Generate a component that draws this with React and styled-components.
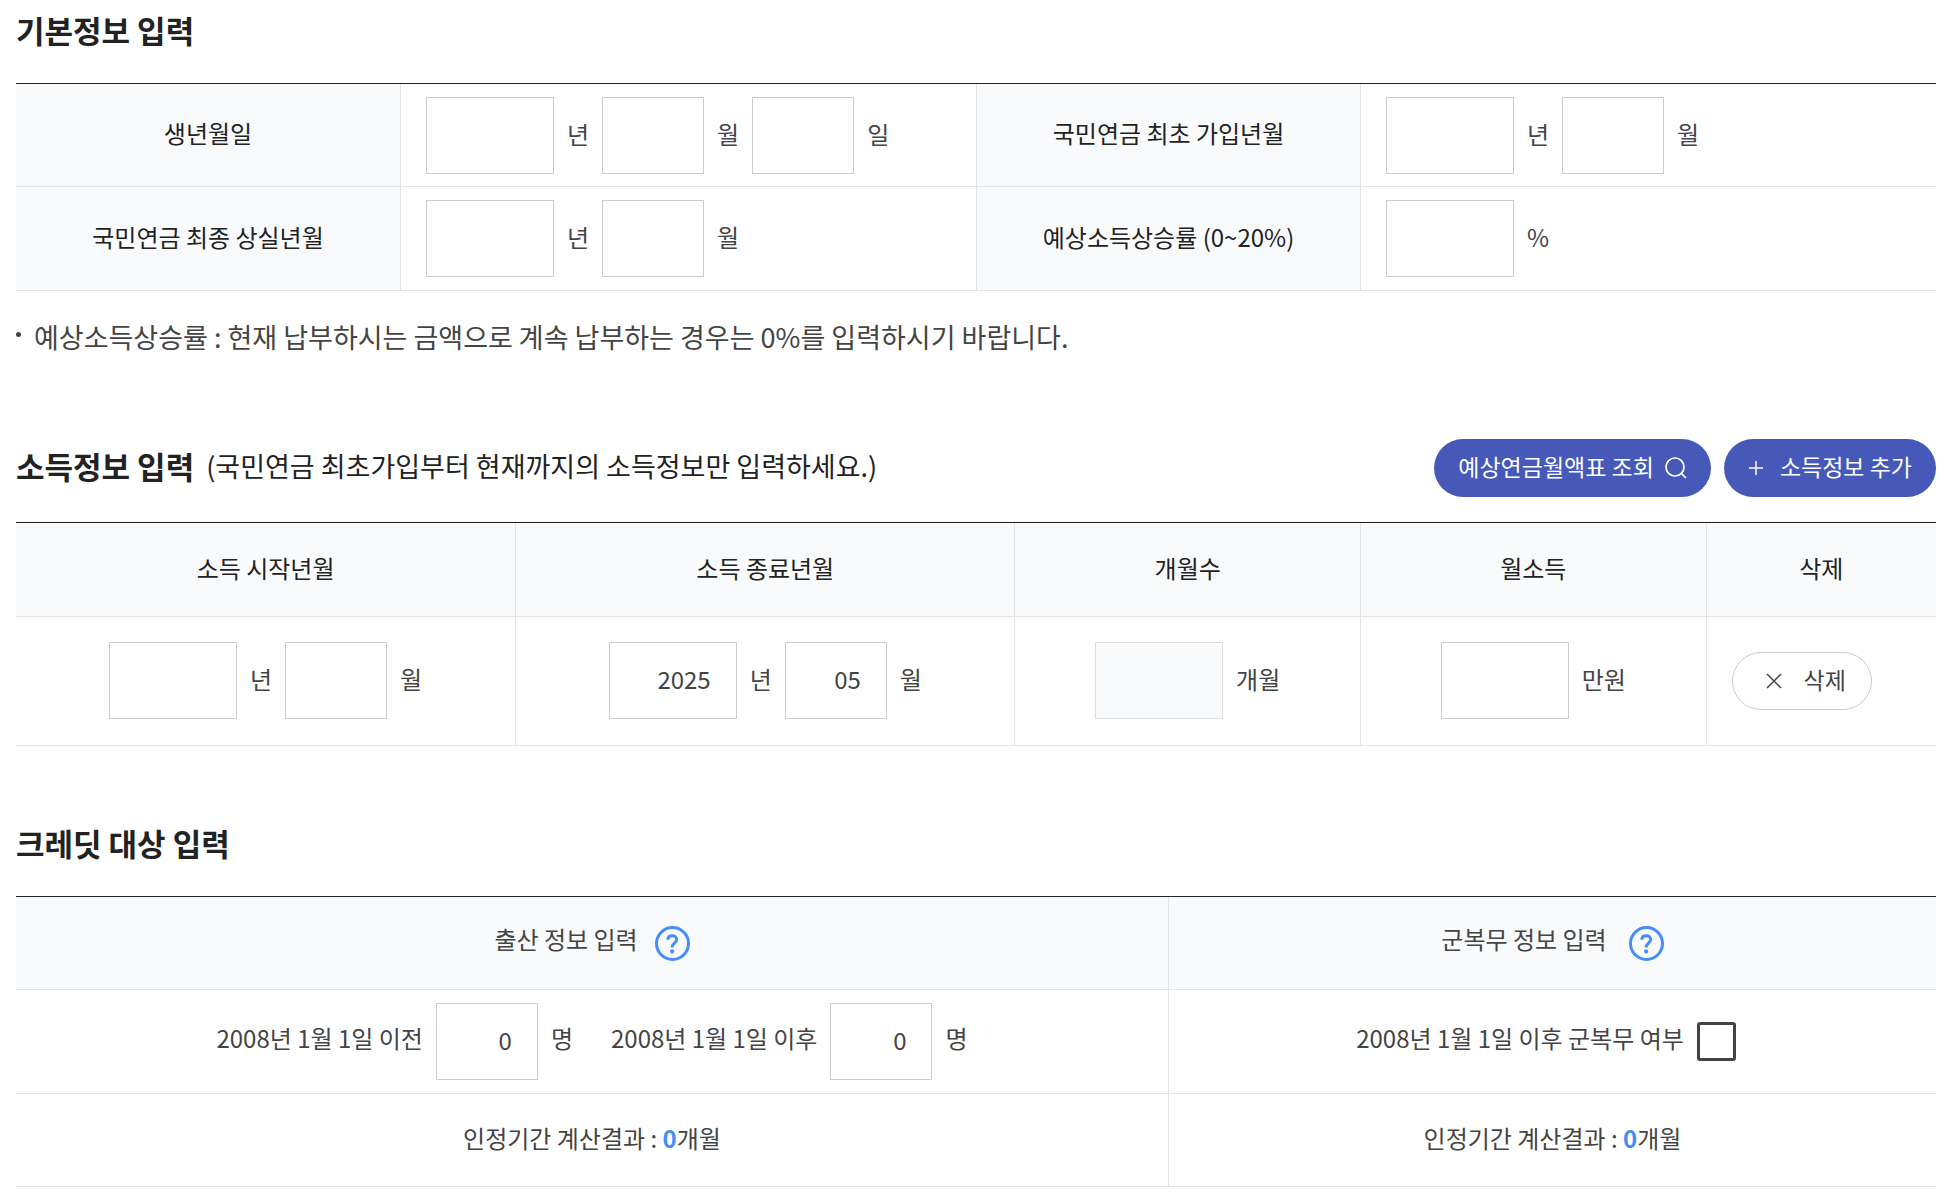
import React from 'react'
import styled, { createGlobalStyle } from 'styled-components'

const GlobalStyle = createGlobalStyle`
  * {
    box-sizing: border-box;
  }
  body {
    margin: 0;
    background: #fff;
    color: #444;
    font-family: "Noto Sans CJK KR", "Noto Sans", sans-serif;
    font-size: 24px;
    line-height: 36px;
  }
  input, button {
    font: inherit;
    color: inherit;
  }
`

const Container = styled.main`
  padding: 6px 12px 8px 16px;
`

const Section = styled.section`
  margin-bottom: 73px;
  &:last-child {
    margin-bottom: 0;
  }
`

const SectionHead = styled.div`
  display: flex;
  align-items: center;
  gap: 12px;
  min-height: 52px;
  margin-bottom: 25px;
`

const Title = styled.h2`
  margin: 0;
  padding-bottom: 4px;
  font-size: 31px;
  line-height: 48px;
  font-weight: 700;
  color: #222;
`

const SubTitle = styled.span`
  padding-bottom: 4px;
  font-size: 27px;
  line-height: 48px;
  color: #222;
`

const ButtonGroup = styled.div`
  display: flex;
  gap: 13px;
  margin-left: auto;
`

const PillButton = styled.button`
  display: flex;
  align-items: center;
  gap: ${(props) => props.$gap || '11px'};
  height: 58px;
  padding: 0 24px;
  border: 0;
  border-radius: 29px;
  background: #4659b8;
  color: #fff;
  font-size: 23px;
  cursor: pointer;
`

const DeleteButton = styled(PillButton)`
  padding: 0 25px 0 33px;
  border: 1px solid #ccc;
  background: #fff;
  color: #444;
`

const Table = styled.table`
  width: 100%;
  table-layout: fixed;
  border-collapse: separate;
  border-spacing: 0;
  border-top: 1px solid #222;
`

const Th = styled.th`
  height: ${(props) => props.$height || 'auto'};
  padding: ${(props) => (props.$soft ? '0' : '0 0 4px')};
  background: #f9fafc;
  border-bottom: 1px solid #e3e4e6;
  color: ${(props) => (props.$soft ? '#444' : '#222')};
  font-weight: 400;
  text-align: center;
  & + &, td + & {
    border-left: 1px solid #e3e4e6;
  }
`

const Td = styled.td`
  height: ${(props) => props.$height || 'auto'};
  padding: ${(props) => props.$padding || '13px 25px'};
  border-bottom: 1px solid #e3e4e6;
  text-align: center;
  & + &, th + & {
    border-left: 1px solid #e3e4e6;
  }
`

const Fields = styled.div`
  display: flex;
  align-items: center;
  justify-content: ${(props) => (props.$center ? 'center' : 'flex-start')};
  gap: ${(props) => props.$gap || '13px'};
`

const Label = styled.label`
  display: flex;
  align-items: center;
  gap: 13px;
`

const CheckLabel = styled(Label)`
  padding-right: 13px;
`

const Text = styled.span`
  padding-bottom: ${(props) => (props.$high ? '8px' : '4px')};
`

const Input = styled.input`
  width: ${(props) => (props.$short ? '102px' : '128px')};
  height: 77px;
  padding: 0 25px 4px;
  border: 1px solid #ccc;
  border-radius: 0;
  background: #fff;
  text-align: right;
  outline: none;
  &:disabled {
    background: #f9fafc;
    border-color: #ddd;
  }
`

const Checkbox = styled.input`
  appearance: none;
  width: 39px;
  height: 39px;
  margin: 0;
  border: 3px solid #444;
  border-radius: 3px;
  background: #fff;
  &:checked {
    background: #444;
  }
`

const NoteList = styled.ul`
  margin: 0;
  padding: 23px 0 6px;
  list-style: none;
`

const NoteItem = styled.li`
  display: flex;
  align-items: center;
  gap: 13px;
  font-size: 27px;
  line-height: 46px;
  &::before {
    content: "";
    width: 5px;
    height: 5px;
    margin-bottom: 5px;
    border-radius: 50%;
    background: #444;
  }
`

const HelpButton = styled.button`
  display: flex;
  padding: 0;
  border: 0;
  background: none;
  cursor: pointer;
`

const Result = styled.strong`
  color: #448ef7;
  font-weight: 700;
`

const SearchIcon = () => (
  <svg width="22" height="22" viewBox="0 0 22 22" fill="none" stroke="currentColor" strokeWidth="1.7" aria-hidden="true">
    <circle cx="10" cy="10" r="9" />
    <path d="M16.6 16.6L21 21" />
  </svg>
)

const PlusIcon = () => (
  <svg width="16" height="16" viewBox="0 0 16 16" fill="none" stroke="currentColor" strokeWidth="1.5" aria-hidden="true">
    <path d="M8 1V15M1 8H15" />
  </svg>
)

const CloseIcon = () => (
  <svg width="16" height="16" viewBox="0 0 16 16" fill="none" stroke="currentColor" strokeWidth="1.5" aria-hidden="true">
    <path d="M1 1L15 15M15 1L1 15" />
  </svg>
)

const HelpIcon = () => (
  <svg width="35" height="35" viewBox="0 0 35 35" fill="none" stroke="#448ef7" aria-hidden="true">
    <circle cx="17.5" cy="17.5" r="16" strokeWidth="3" />
    <path d="M12.8 13.8C12.9 11.2 14.7 9.8 17.3 9.8C19.9 9.8 21.7 11.3 21.7 13.5C21.7 16.7 17.1 17 17.1 21.4" strokeWidth="3" />
    <circle cx="17.1" cy="25.4" r="2.1" fill="#448ef7" stroke="none" />
  </svg>
)

const Field = ({ unit, ...rest }) => (
  <Label>
    <Input type="text" {...rest} />
    <Text>{unit}</Text>
  </Label>
)

const App = () => {
  return (
    <>
      <GlobalStyle />
      <Container>
        <Section>
          <SectionHead>
            <Title>기본정보 입력</Title>
          </SectionHead>
          <Table>
            <colgroup>
              <col width="20%" />
              <col width="30%" />
              <col width="20%" />
              <col width="30%" />
            </colgroup>
            <tbody>
              <tr>
                <Th scope="row">생년월일</Th>
                <Td $padding="13px 25px 12px">
                  <Fields>
                    <Field unit="년" />
                    <Field unit="월" $short />
                    <Field unit="일" $short />
                  </Fields>
                </Td>
                <Th scope="row">국민연금 최초 가입년월</Th>
                <Td $padding="13px 25px 12px">
                  <Fields>
                    <Field unit="년" />
                    <Field unit="월" $short />
                  </Fields>
                </Td>
              </tr>
              <tr>
                <Th scope="row">국민연금 최종 상실년월</Th>
                <Td>
                  <Fields>
                    <Field unit="년" />
                    <Field unit="월" $short />
                  </Fields>
                </Td>
                <Th scope="row">예상소득상승률 (0~20%)</Th>
                <Td>
                  <Fields>
                    <Field unit="%" />
                  </Fields>
                </Td>
              </tr>
            </tbody>
          </Table>
          <NoteList>
            <NoteItem>
              예상소득상승률 : 현재 납부하시는 금액으로 계속 납부하는 경우는 0%를 입력하시기 바랍니다.
            </NoteItem>
          </NoteList>
        </Section>

        <Section>
          <SectionHead>
            <Title>소득정보 입력</Title>
            <SubTitle>(국민연금 최초가입부터 현재까지의 소득정보만 입력하세요.)</SubTitle>
            <ButtonGroup>
              <PillButton type="button">
                <Text>예상연금월액표 조회</Text>
                <SearchIcon />
              </PillButton>
              <PillButton type="button" $gap="16px">
                <PlusIcon />
                <Text>소득정보 추가</Text>
              </PillButton>
            </ButtonGroup>
          </SectionHead>
          <Table>
            <colgroup>
              <col width="26%" />
              <col width="26%" />
              <col width="18%" />
              <col width="18%" />
              <col width="12%" />
            </colgroup>
            <thead>
              <tr>
                <Th scope="col" $height="94px">소득 시작년월</Th>
                <Th scope="col">소득 종료년월</Th>
                <Th scope="col">개월수</Th>
                <Th scope="col">월소득</Th>
                <Th scope="col">삭제</Th>
              </tr>
            </thead>
            <tbody>
              <tr>
                <Td $padding="25px 25px 26px">
                  <Fields $center>
                    <Field unit="년" />
                    <Field unit="월" $short />
                  </Fields>
                </Td>
                <Td $padding="25px 25px 26px">
                  <Fields $center>
                    <Field unit="년" defaultValue="2025" />
                    <Field unit="월" defaultValue="05" $short />
                  </Fields>
                </Td>
                <Td $padding="25px 25px 26px">
                  <Fields $center>
                    <Field unit="개월" disabled />
                  </Fields>
                </Td>
                <Td $padding="25px 25px 26px">
                  <Fields $center>
                    <Field unit="만원" />
                  </Fields>
                </Td>
                <Td $padding="25px 25px 26px">
                  <DeleteButton type="button" $gap="22px">
                    <CloseIcon />
                    <Text>삭제</Text>
                  </DeleteButton>
                </Td>
              </tr>
            </tbody>
          </Table>
        </Section>

        <Section>
          <SectionHead>
            <Title>크레딧 대상 입력</Title>
          </SectionHead>
          <Table>
            <colgroup>
              <col width="60%" />
              <col width="40%" />
            </colgroup>
            <thead>
              <tr>
                <Th scope="col" $height="93px" $soft>
                  <Fields $center $gap="17px">
                    <Text $high>출산 정보 입력</Text>
                    <HelpButton type="button" aria-label="출산 정보 도움말">
                      <HelpIcon />
                    </HelpButton>
                  </Fields>
                </Th>
                <Th scope="col" $soft>
                  <Fields $center $gap="22px">
                    <Text $high>군복무 정보 입력</Text>
                    <HelpButton type="button" aria-label="군복무 정보 도움말">
                      <HelpIcon />
                    </HelpButton>
                  </Fields>
                </Th>
              </tr>
            </thead>
            <tbody>
              <tr>
                <Td>
                  <Fields $center $gap="38px">
                    <Label>
                      <Text $high>2008년 1월 1일 이전</Text>
                      <Input type="text" defaultValue="0" $short />
                      <Text $high>명</Text>
                    </Label>
                    <Label>
                      <Text $high>2008년 1월 1일 이후</Text>
                      <Input type="text" defaultValue="0" $short />
                      <Text $high>명</Text>
                    </Label>
                  </Fields>
                </Td>
                <Td>
                  <Fields $center>
                    <CheckLabel>
                      <Text $high>2008년 1월 1일 이후 군복무 여부</Text>
                      <Checkbox type="checkbox" />
                    </CheckLabel>
                  </Fields>
                </Td>
              </tr>
              <tr>
                <Td $height="93px" $padding="13px 25px 18px">
                  인정기간 계산결과 : <Result>0</Result>개월
                </Td>
                <Td $padding="13px 25px 18px">
                  인정기간 계산결과 : <Result>0</Result>개월
                </Td>
              </tr>
            </tbody>
          </Table>
        </Section>
      </Container>
    </>
  )
}

export default App
